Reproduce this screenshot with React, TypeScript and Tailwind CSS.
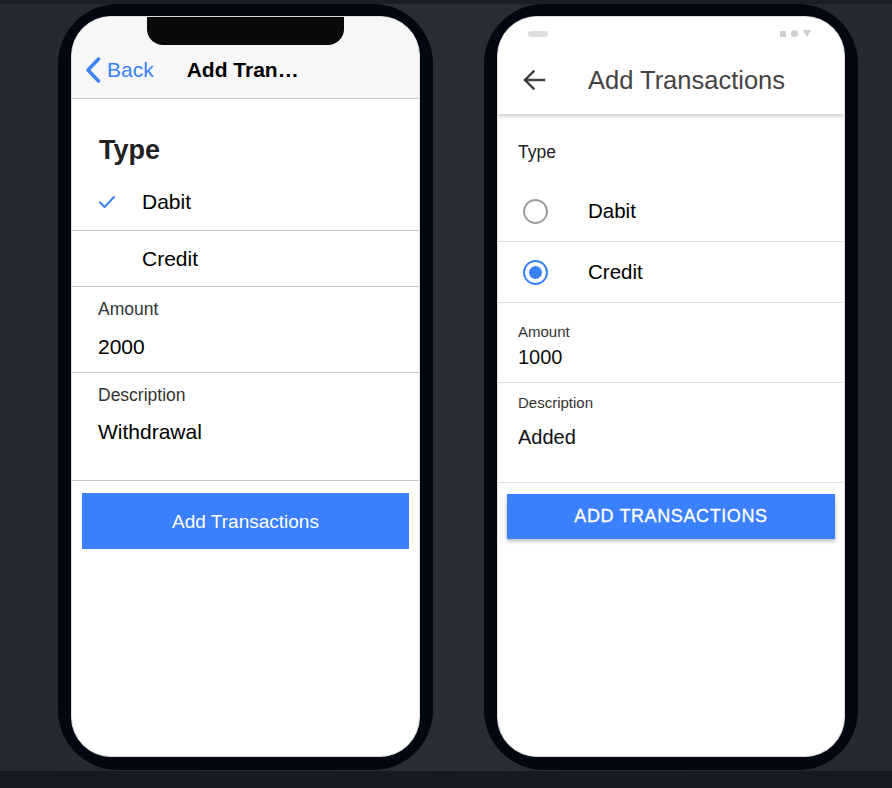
const font = { fontFamily: '"Liberation Sans", Arial, sans-serif' };

function CheckMark() {
  return (
    <svg width="18" height="14" viewBox="0 0 18 14" fill="none">
      <path d="M2 7.5 L6.5 12 L16 2" stroke="#3b82f6" strokeWidth="2" strokeLinecap="round" strokeLinejoin="round" />
    </svg>
  );
}

function IosPhone() {
  return (
    <div className="h-[766px] w-[375px] rounded-[60px] bg-[#020711] pt-[12px] pb-[13px] px-[13px]">
      <div className="relative h-full w-full overflow-hidden rounded-[40px] border border-[#dcdcdc] bg-white">
        <div className="absolute left-[75px] top-0 h-[28px] w-[197px] rounded-b-[16px] bg-[#0a0a0c]" />
        <div className="h-[82px] border-b border-[#c8c8c8] bg-[#f7f7f7] pt-[31px]">
          <div className="flex h-[44px] items-center pl-[13px]">
            <svg width="16" height="26" viewBox="0 0 16 26" fill="none">
              <path d="M13.5 2 L3 13 L13.5 24" stroke="#3a82f7" strokeWidth="3.4" strokeLinecap="round" strokeLinejoin="round" />
            </svg>
            <span className="ml-[6px] text-[21px] text-[#3a82f7]">Back</span>
            <span className="ml-[33px] text-[21px] font-bold text-black">Add Tran…</span>
          </div>
        </div>
        <div className="h-[75px] pl-[27px] pt-[35px] text-[27px] font-bold leading-[32px] text-[#222]">Type</div>
        <div className="flex h-[57px] items-center border-b border-[#c8c8c8] pl-[26px]">
          <div className="w-[44px]"><CheckMark /></div>
          <span className="text-[21px] text-black">Dabit</span>
        </div>
        <div className="flex h-[56px] items-center border-b border-[#c8c8c8] pl-[70px]">
          <span className="text-[21px] text-black">Credit</span>
        </div>
        <div className="h-[86px] border-b border-[#c8c8c8] pl-[26px] pt-[12px]">
          <div className="text-[17.5px] leading-[20px] text-[#333]">Amount</div>
          <div className="mt-[16px] text-[21px] leading-[24px] text-black">2000</div>
        </div>
        <div className="h-[108px] border-b border-[#c8c8c8] pl-[26px] pt-[12px]">
          <div className="text-[17.5px] leading-[20px] text-[#333]">Description</div>
          <div className="mt-[15px] text-[21px] leading-[24px] text-black">Withdrawal</div>
        </div>
        <div className="mx-[10px] mt-[12px] flex h-[56px] items-center justify-center bg-[#3b80ff] pt-[2px] text-[19px] text-white">
          Add Transactions
        </div>
      </div>
    </div>
  );
}

function Radio({ on }: { on: boolean }) {
  return on ? (
    <div className="flex h-[25px] w-[25px] items-center justify-center rounded-full border-2 border-[#3b82f6]">
      <div className="h-[13px] w-[13px] rounded-full bg-[#3b82f6]" />
    </div>
  ) : (
    <div className="h-[25px] w-[25px] rounded-full border-2 border-[#9e9e9e]" />
  );
}

function AndroidPhone() {
  return (
    <div className="h-[766px] w-[374px] rounded-[60px] bg-[#020711] pt-[12px] pb-[13px] px-[13px]">
      <div className="relative h-full w-full overflow-hidden rounded-[40px] border border-[#dcdcdc] bg-white">
        <div className="relative z-10 h-[97px] bg-white shadow-[0_2px_4px_rgba(0,0,0,0.22)]">
          <div className="flex items-center justify-between pl-[30px] pr-[33px] pt-[13px]">
            <div className="h-[6px] w-[20px] rounded-full bg-[#dedede]" />
            <div className="flex items-center gap-[5px]">
              <div className="h-[6px] w-[6px] bg-[#d0d0d0]" />
              <div className="h-[7px] w-[7px] rounded-full bg-[#d0d0d0]" />
              <svg width="8" height="7" viewBox="0 0 8 7"><path d="M0 0 H8 L4 7 Z" fill="#d0d0d0" /></svg>
            </div>
          </div>
          <div className="mt-[19px] flex h-[48px] items-center pl-[24px]">
            <svg width="24" height="24" viewBox="0 0 24 24" fill="none">
              <path d="M22 12 H3 M11.5 3.5 L3 12 L11.5 20.5" stroke="#3f3f3f" strokeWidth="2.4" strokeLinecap="square" />
            </svg>
            <span className="ml-[42px] text-[25.5px] text-[#444]">Add Transactions</span>
          </div>
        </div>
        <div className="h-[67px] pl-[20px] pt-[28px] text-[17.5px] leading-[20px] text-[#222]">Type</div>
        <div className="flex h-[61px] items-center border-b border-[#e0e0e0] pl-[25px]">
          <div className="w-[65px]"><Radio on={false} /></div>
          <span className="text-[20.5px] text-black">Dabit</span>
        </div>
        <div className="flex h-[61px] items-center border-b border-[#e0e0e0] pl-[25px]">
          <div className="w-[65px]"><Radio on /></div>
          <span className="text-[20.5px] text-black">Credit</span>
        </div>
        <div className="h-[80px] border-b border-[#e0e0e0] pl-[20px] pt-[20px]">
          <div className="text-[15px] leading-[18px] text-[#333]">Amount</div>
          <div className="mt-[4px] text-[20px] leading-[24px] text-[#111]">1000</div>
        </div>
        <div className="h-[100px] border-b border-[#e0e0e0] pl-[20px] pt-[11px]">
          <div className="text-[15px] leading-[18px] text-[#333]">Description</div>
          <div className="mt-[13px] text-[20px] leading-[24px] text-[#111]">Added</div>
        </div>
        <div className="mx-[9px] mt-[11px] flex h-[45px] items-center justify-center bg-[#3b80ff] text-[18px] font-medium uppercase tracking-[0.6px] text-white shadow-[0_2px_4px_rgba(0,0,0,0.3)] [-webkit-text-stroke:0.3px_white]">
          Add Transactions
        </div>
      </div>
    </div>
  );
}

export default function App() {
  return (
    <div className="flex h-[788px] w-full flex-col bg-[#252a33]" style={font}>
      <div className="h-[4px] bg-[#1b1e25]" />
      <div className="flex h-[767px] items-start gap-[51px] pl-[58px] bg-gradient-to-r from-[#242931] via-[#282d36] to-[#242931]">
        <IosPhone />
        <AndroidPhone />
      </div>
      <div className="flex-1 bg-[#161a21]" />
    </div>
  );
}
